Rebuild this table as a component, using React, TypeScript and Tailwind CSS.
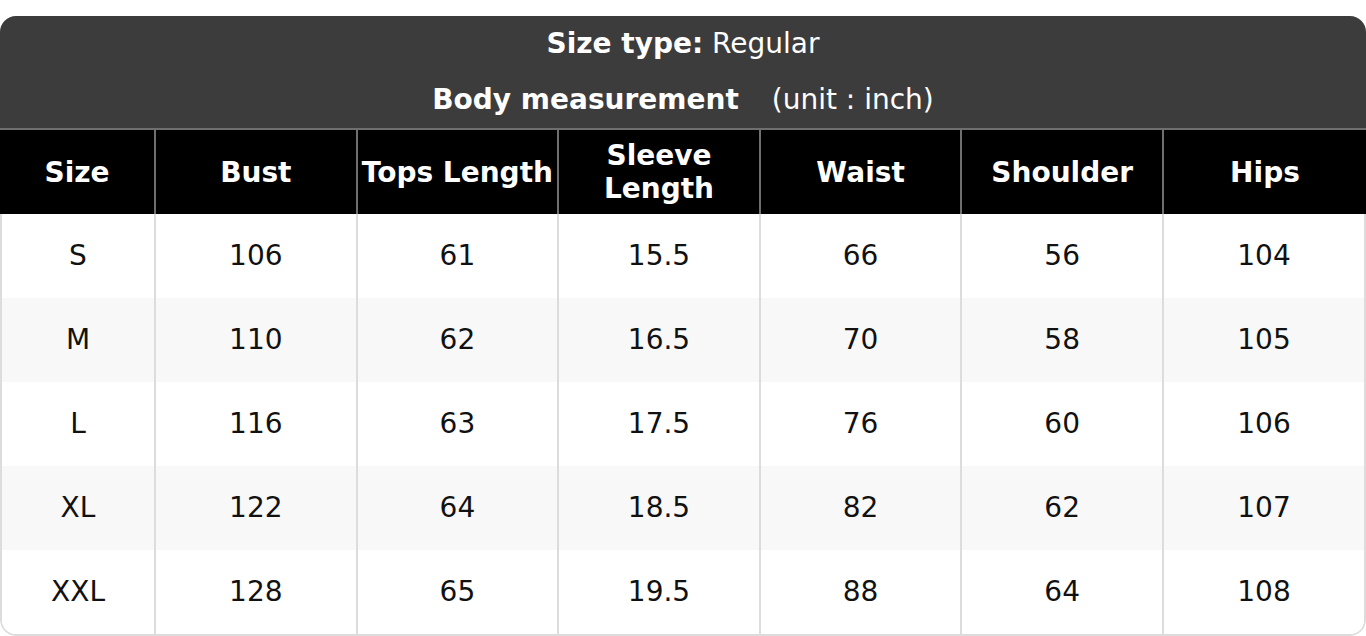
const headers = ['Size', 'Bust', 'Tops Length', 'Sleeve Length', 'Waist', 'Shoulder', 'Hips'];

const rows = [
  ['S', '106', '61', '15.5', '66', '56', '104'],
  ['M', '110', '62', '16.5', '70', '58', '105'],
  ['L', '116', '63', '17.5', '76', '60', '106'],
  ['XL', '122', '64', '18.5', '82', '62', '107'],
  ['XXL', '128', '65', '19.5', '88', '64', '108'],
];

export default function App() {
  return (
    <div className="min-h-screen bg-white pt-4 font-['DejaVu_Sans',sans-serif] text-[28px]">
      <div className="rounded-[16px] overflow-hidden">
        {/* Title block */}
        <div className="bg-[#3c3c3c] text-white">
          <div className="h-[56px] flex items-center justify-center">
            <span className="font-bold">Size type:</span>
            <span>&nbsp;Regular</span>
          </div>
          <div className="h-[56px] flex items-center justify-center">
            <span className="font-bold">Body measurement</span>
            <span className="ml-[33px]">(unit : inch)</span>
          </div>
        </div>

        {/* Column headers */}
        <div className="grid grid-cols-[154px_repeat(5,201.6px)_1fr] bg-black border-t-2 border-[#6f6f6f]">
          {headers.map((h) => (
            <div
              key={h}
              className="h-[84px] flex items-center justify-center text-center font-bold text-white leading-[33px] border-l-2 border-[#6f6f6f] first:border-l-0"
            >
              {h}
            </div>
          ))}
        </div>

        {/* Body */}
        <div className="border-x-2 border-b-2 border-[#dcdcdc] rounded-b-[16px] overflow-hidden">
          {rows.map((row, i) => (
            <div
              key={row[0]}
              className={`grid grid-cols-[152px_repeat(5,201.6px)_1fr] ${i % 2 === 1 ? 'bg-[#f8f8f8]' : 'bg-white'}`}
            >
              {row.map((cell, j) => (
                <div
                  key={j}
                  className="h-[84px] flex items-center justify-center text-[#111] border-l-2 border-[#dcdcdc] first:border-l-0"
                >
                  {cell}
                </div>
              ))}
            </div>
          ))}
        </div>
      </div>
    </div>
  );
}
